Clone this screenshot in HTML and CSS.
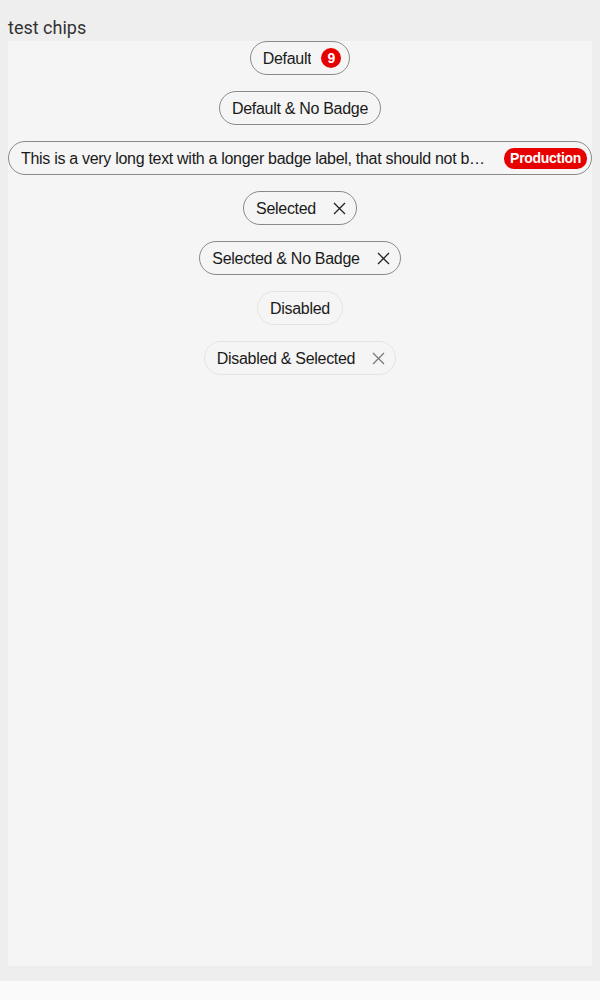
FILE: index.html
```html
<!DOCTYPE html>
<html>
<head>
<meta charset="utf-8">
<link rel="stylesheet" href="styles.css">
</head>
<body>
<div class="page">
  <div class="title">test chips</div>
  <div class="panel">
    <div class="chip has-badge"><span class="label">Default</span><span class="badge round">9</span></div>
    <div class="chip"><span class="label">Default &amp; No Badge</span></div>
    <div class="chip has-badge long"><span class="label">This is a very long text with a longer badge label, that should not be visible completely in the chip</span><span class="badge">Production</span></div>
    <div class="chip selected"><span class="label">Selected</span><svg class="close" viewBox="0 0 13 13"><path d="M1 1L12 12M12 1L1 12"/></svg></div>
    <div class="chip selected"><span class="label">Selected &amp; No Badge</span><svg class="close" viewBox="0 0 13 13"><path d="M1 1L12 12M12 1L1 12"/></svg></div>
    <div class="chip disabled"><span class="label">Disabled</span></div>
    <div class="chip disabled selected"><span class="label">Disabled &amp; Selected</span><svg class="close" viewBox="0 0 13 13"><path d="M1 1L12 12M12 1L1 12"/></svg></div>
  </div>
</div>
<div class="footer"></div>
</body>
</html>
```
FILE: styles.css
```css
html, body {
  margin: 0;
  padding: 0;
  background: #fafafa;
}
.page {
  height: 981px;
  box-sizing: border-box;
  background: #eeeeee;
  padding: 0 8px 15px;
  display: flex;
  flex-direction: column;
}
.title {
  font-family: Roboto, "Liberation Sans", sans-serif;
  font-size: 18px;
  line-height: 21px;
  color: #333333;
  padding-top: 17px;
  height: 24px;
}
.panel {
  flex: 1;
  background: #f5f5f5;
  display: flex;
  flex-direction: column;
  align-items: center;
  gap: 16px;
  min-width: 0;
}
.chip {
  display: flex;
  align-items: center;
  box-sizing: border-box;
  height: 34px;
  max-width: 100%;
  padding: 1px 12px 0;
  border: 1px solid #8a8a8a;
  border-radius: 17px;
  font-family: "Liberation Sans", Arial, sans-serif;
  font-size: 16px;
  letter-spacing: -0.3px;
  line-height: 20px;
  color: #1a1a1a;
}
.chip .label {
  white-space: nowrap;
  overflow: hidden;
  text-overflow: ellipsis;
  min-width: 0;
}
.chip.has-badge {
  padding-right: 8px;
}
.badge {
  flex: none;
  margin-left: 10px;
  margin-top: -1px;
  height: 20px;
  min-width: 20px;
  box-sizing: border-box;
  padding: 0 5px;
  border-radius: 10px;
  background: #e60000;
  color: #ffffff;
  font-weight: bold;
  font-size: 14px;
  line-height: 20px;
  text-align: center;
}
.badge.round {
  padding: 0;
  letter-spacing: 0;
}
.long .label {
  flex: 1;
}
.chip.long {
  padding-right: 4px;
}
.long .badge {
  margin-left: 16px;
  padding: 0 6px;
  height: 21px;
  line-height: 21px;
}
.chip.selected {
  padding-right: 10px;
}
.close {
  flex: none;
  width: 13px;
  height: 13px;
  margin-left: 17px;
  margin-top: -1px;
  fill: none;
  stroke: #222222;
  stroke-width: 1.3;
}
.chip.disabled {
  border-color: #e4e4e4;
}
.chip.disabled .close {
  stroke: #7a7a7a;
}
.footer {
  height: 19px;
}
```
